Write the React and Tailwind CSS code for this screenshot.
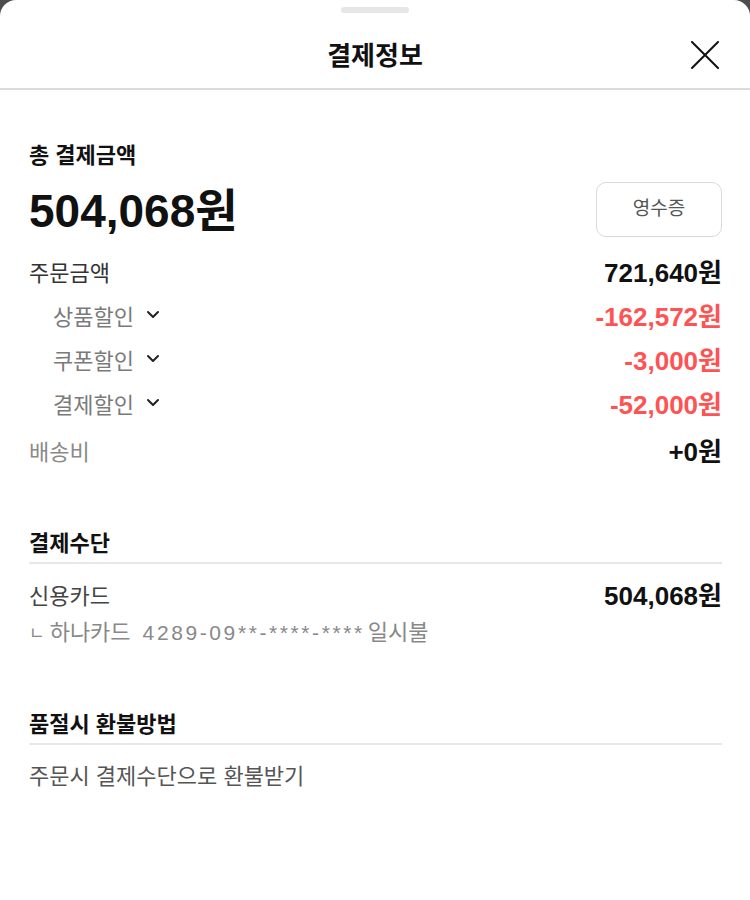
const FONT = { fontFamily: '"Liberation Sans", "Noto Sans CJK KR", sans-serif' }

const ROWS = [
  { label: '주문금액', value: '721,640원', tone: 'main' },
  { label: '상품할인', value: '-162,572원', tone: 'sub' },
  { label: '쿠폰할인', value: '-3,000원', tone: 'sub' },
  { label: '결제할인', value: '-52,000원', tone: 'sub' },
  { label: '배송비', value: '+0원', tone: 'muted' },
]

function Chevron() {
  return (
    <svg width="14" height="10" viewBox="0 0 14 10" className="ml-[12px] -mt-[4px]">
      <polyline points="2,2 7,7 12,2" fill="none" stroke="#222" strokeWidth="2" strokeLinecap="round" strokeLinejoin="round" />
    </svg>
  )
}

function CloseIcon() {
  return (
    <svg width="28" height="28" viewBox="0 0 28 28">
      <path d="M1 1 L27 27 M27 1 L1 27" stroke="#111" strokeWidth="2" strokeLinecap="round" fill="none" />
    </svg>
  )
}

function Row({ label, value, tone, last }) {
  const labelCls =
    tone === 'main' ? 'text-[#333]' : tone === 'sub' ? 'text-[#7a7a7a] pl-[24px]' : 'text-[#8a8a8a]'
  const valueCls = tone === 'sub' ? 'text-[#ff5252]' : 'text-[#111]'
  return (
    <div className={`flex items-center justify-between h-[44px] ${last ? 'mt-[3px]' : ''}`}>
      <div className={`flex items-center text-[22px] ${labelCls}`}>
        {label}
        {tone === 'sub' && <Chevron />}
      </div>
      <div className={`text-[26px] font-bold ${valueCls}`}>{value}</div>
    </div>
  )
}

function SectionTitle({ children }) {
  return (
    <div className="text-[22px] font-bold leading-[28px] text-[#111] pb-[4px] border-b-2 border-[#e8e8e8]">
      {children}
    </div>
  )
}

export default function App() {
  return (
    <div className="h-[900px] bg-[#4d4d4d]" style={FONT}>
      <div className="h-full bg-white rounded-t-[16px]">
        {/* handle */}
        <div className="pt-[7px]">
          <div className="mx-auto w-[68px] h-[6px] rounded-full bg-[#e6e6e6]" />
        </div>

        {/* header */}
        <div className="relative flex items-center justify-center h-[77px] pt-[12px] border-b-2 border-[#d8dcdf]">
          <span className="text-[26px] font-bold text-[#111]">결제정보</span>
          <button className="absolute right-[31px] top-[28px]">
            <CloseIcon />
          </button>
        </div>

        <div className="pl-[29px] pr-[28px]">
          {/* total */}
          <div className="pt-[52px] text-[22px] font-bold leading-[28px] text-[#111]">총 결제금액</div>
          <div className="mt-[12px] flex items-center justify-between h-[55px]">
            <span className="text-[46px] font-bold text-[#111] leading-none mt-[2px]">504,068원</span>
            <button className="w-[126px] h-[55px] rounded-[10px] border border-[#d9d9d9] text-[19px] text-[#555] bg-white">
              영수증
            </button>
          </div>

          <div className="mt-[14px]">
            {ROWS.map((r, i) => <Row key={r.label} {...r} last={i === ROWS.length - 1} />)}
          </div>

          {/* payment method */}
          <div className="mt-[56px]">
            <SectionTitle>결제수단</SectionTitle>
            <div className="mt-[14px] flex items-center justify-between h-[36px]">
              <span className="text-[22px] text-[#444]">신용카드</span>
              <span className="text-[26px] font-bold text-[#111]">504,068원</span>
            </div>
            <div className="flex items-center h-[37px] text-[22px] text-[#888]">
              <span className="text-[17px] mr-[5px] mt-[2px]">ㄴ</span>
              <span>하나카드</span>
              <span className="ml-[12px] text-[21px] tracking-[2.6px]">4289-09**-****-****</span>
              <span className="ml-[3px]">일시불</span>
            </div>
          </div>

          {/* refund */}
          <div className="mt-[60px]">
            <SectionTitle>품절시 환불방법</SectionTitle>
            <div className="mt-[13px] flex items-center h-[36px] text-[22px] text-[#555]">
              주문시 결제수단으로 환불받기
            </div>
          </div>
        </div>
      </div>
    </div>
  )
}
